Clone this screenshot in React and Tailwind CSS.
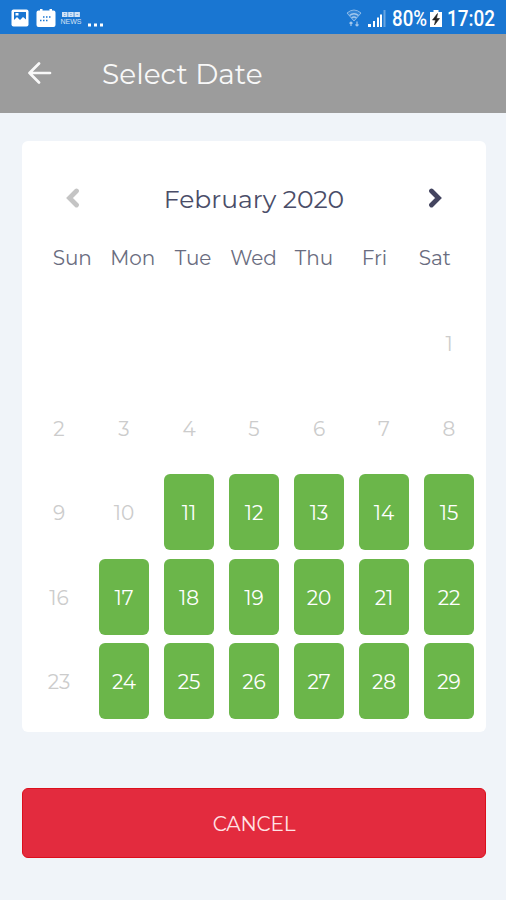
import React, { useState } from 'react';
import clsx from 'clsx';

const weekdays = ['Sun', 'Mon', 'Tue', 'Wed', 'Thu', 'Fri', 'Sat'];

// February 2020 starts on a Saturday
const days = Array.from({ length: 29 }, (_, i) => i + 1);
const unavailable = [16, 23];

const isAvailable = (day) => day >= 11 && !unavailable.includes(day);

const Chevron = ({ d }) => (
  <svg width="14" height="20" viewBox="0 0 14 20" fill="none" stroke="currentColor" strokeWidth="4.8" strokeLinecap="round">
    <path d={d} />
  </svg>
);

const StatusBar = () => (
  <div className="flex h-[34px] items-center justify-between bg-[#1976d2] pl-[11px] pr-[11px] text-white">
    <div className="flex items-center">
      {/* Picture */}
      <svg width="18" height="18" viewBox="0 0 18 18" className="mt-[1px]">
        <rect x="0.5" y="0.5" width="17" height="17" rx="2" fill="#fff" />
        <path d="M3 3h12v7.500l-3-2.500-3 3-3-3-3 3z" fill="#1976d2" />
        <path d="M4.500 4h3v2.500h-3z" fill="#fff" />
      </svg>
      {/* Calendar */}
      <svg width="20" height="18" viewBox="0 0 20 18" className="ml-[7px] mt-[1px]">
        <path d="M2.500 1.500H4V0h2.500v1.500h7V0H16v1.500h1.500q2 0 2 2V16q0 2-2 2h-15q-2 0-2-2V3.500q0-2 2-2z" fill="#fff" />
        <path d="M7 8h9M4 11.500h9" stroke="#1976d2" strokeWidth="1.5" strokeDasharray="1.5 1.5" />
      </svg>
      {/* News */}
      <div className="ml-[5px] mt-[2px] flex w-5 flex-col items-center opacity-80">
        <svg width="18" height="5" viewBox="0 0 18 5">
          <path d="M0 0h5.500v5H0zM6.200 0h5.500v5H6.200zM12.400 0h5.500v5h-5.500z" fill="#fff" />
          <path d="M2 1.500h1.500M2 3.500h1.500M8.200 1.500h1.500M8.200 3.500h1.500M14.400 2.500h1.800" stroke="#1976d2" strokeWidth="0.5" />
        </svg>
        <span className="mt-[1px] font-['Liberation_Sans',sans-serif] text-[7px] leading-[7px]">NEWS</span>
      </div>
      {/* More */}
      <svg width="15" height="4" viewBox="0 0 15 4" className="ml-[7px] mt-[15px]">
        <path d="M0 0.500h3v3H0zM6 0.500h3v3H6zM12 0.500h3v3h-3z" fill="#fff" />
      </svg>
    </div>

    <div className="flex items-center font-[Roboto,sans-serif] text-[21.5px] leading-[34px]">
      {/* Wifi */}
      <svg width="16" height="18" viewBox="0 0 16 18" fill="none" stroke="#fff" className="mr-[6px] mt-[2px] opacity-60">
        <path d="M1 4q7-6 14 0L8 12z" fill="#fff" fillOpacity="0.2" strokeWidth="0.8" />
        <path d="M3.500 6.500q4.500-3.500 9 0M5.500 9q2.500-2 5 0" strokeWidth="1.3" />
        <path d="M5 17v-4M3.500 14.500L5 13l1.500 1.500M11 12.500V17M9.500 15.500L11 17l1.500-1.500" strokeWidth="1.2" />
      </svg>
      {/* Signal */}
      <svg width="18" height="18" viewBox="0 0 18 18" fill="#fff" className="mr-[6px] mt-[1px]">
        <path d="M0 15h3v3H0zM5 12h2v6H5zM9 8.500h2V18H9zM12 5.500h2V18h-2z" />
        <path d="M15.500 1H17.500v17h-2z" opacity="0.35" />
      </svg>
      <span className="mt-[3px] w-[35px] origin-left scale-x-[0.87] font-medium">80%</span>
      {/* Battery */}
      <svg width="12" height="17" viewBox="0 0 12 17" className="ml-[3px] mt-[2px]">
        <path d="M3.500 0h5v2H12v15H0V2h3.500z" fill="#fff" />
        <path d="M7.500 3.500L2.500 10h3l-1 5 5-6.500h-3z" fill="#222" stroke="#222" strokeWidth="0.6" />
      </svg>
      <span className="ml-[5px] mt-[3px] w-[48px] origin-left scale-x-[0.88] font-medium">17:02</span>
    </div>
  </div>
);

const App = () => {
  const [selected, setSelected] = useState(null);

  return (
    <div className="h-[900px] w-[506px] overflow-hidden bg-[#f0f4f9] font-[Montserrat,Inter,sans-serif]">
      <StatusBar />

      {/* Header */}
      <div className="flex h-[79px] items-center bg-[#9c9c9c] pl-[27px] text-[#f8f8f8]">
        <button type="button" className="mb-[1px]">
          <svg width="25" height="22" viewBox="0 0 25 22" fill="none" stroke="currentColor" strokeWidth="2.7" strokeLinecap="round" strokeLinejoin="round">
            <path d="M12 1.500L2.500 11l9.500 9.500M2.500 11h20.500" />
          </svg>
        </button>
        <h1 className="ml-[50px] text-[28px] leading-[34px]">Select Date</h1>
      </div>

      {/* Calendar */}
      <div className="ml-[22px] mt-7 h-[591px] w-[464px] rounded-md bg-white pt-[40px]">
        <div className="flex h-[38px] items-center justify-between px-11">
          <button type="button" className="mb-[4px] text-[#c4c4c4]">
            <Chevron d="M10.500 3L3.500 10l7 7" />
          </button>
          <h2 className="text-[25px] text-[#4a4d68]">February 2020</h2>
          <button type="button" className="mb-[4px] text-[#43445f]">
            <Chevron d="M3.500 3l7 7-7 7" />
          </button>
        </div>

        <div className="ml-5 mt-[27px] grid w-[423px] grid-cols-7 text-center text-[20px] leading-[25px] tracking-[-0.1px] text-[#6a6d80]">
          {weekdays.map((name) => (
            <span key={name}>{name}</span>
          ))}
        </div>

        <div className="mt-[34px] grid grid-cols-[repeat(7,50px)] justify-center gap-x-[15px] gap-y-[8.5px] text-[20px]">
          {days.map((day) => (
            <button
              key={day}
              type="button"
              disabled={!isAvailable(day)}
              onClick={() => setSelected(day)}
              className={clsx(
                'h-[76px] rounded-md pt-[2px]',
                day === 1 && 'col-start-7',
                isAvailable(day) ? 'bg-[#6bb64a] text-white' : 'text-[#cccccc]',
                selected === day && 'ring-2 ring-green-800'
              )}
            >
              {day}
            </button>
          ))}
        </div>
      </div>

      {/* Cancel */}
      <button
        type="button"
        onClick={() => setSelected(null)}
        className="ml-[22px] mt-14 block h-[70px] w-[464px] rounded-md border border-[#dc0f1c] bg-[#e32b3e] pt-[2px] text-[20px] tracking-[-0.2px] text-[#ffe3e5]"
      >
        CANCEL
      </button>
    </div>
  );
};

export default App;
